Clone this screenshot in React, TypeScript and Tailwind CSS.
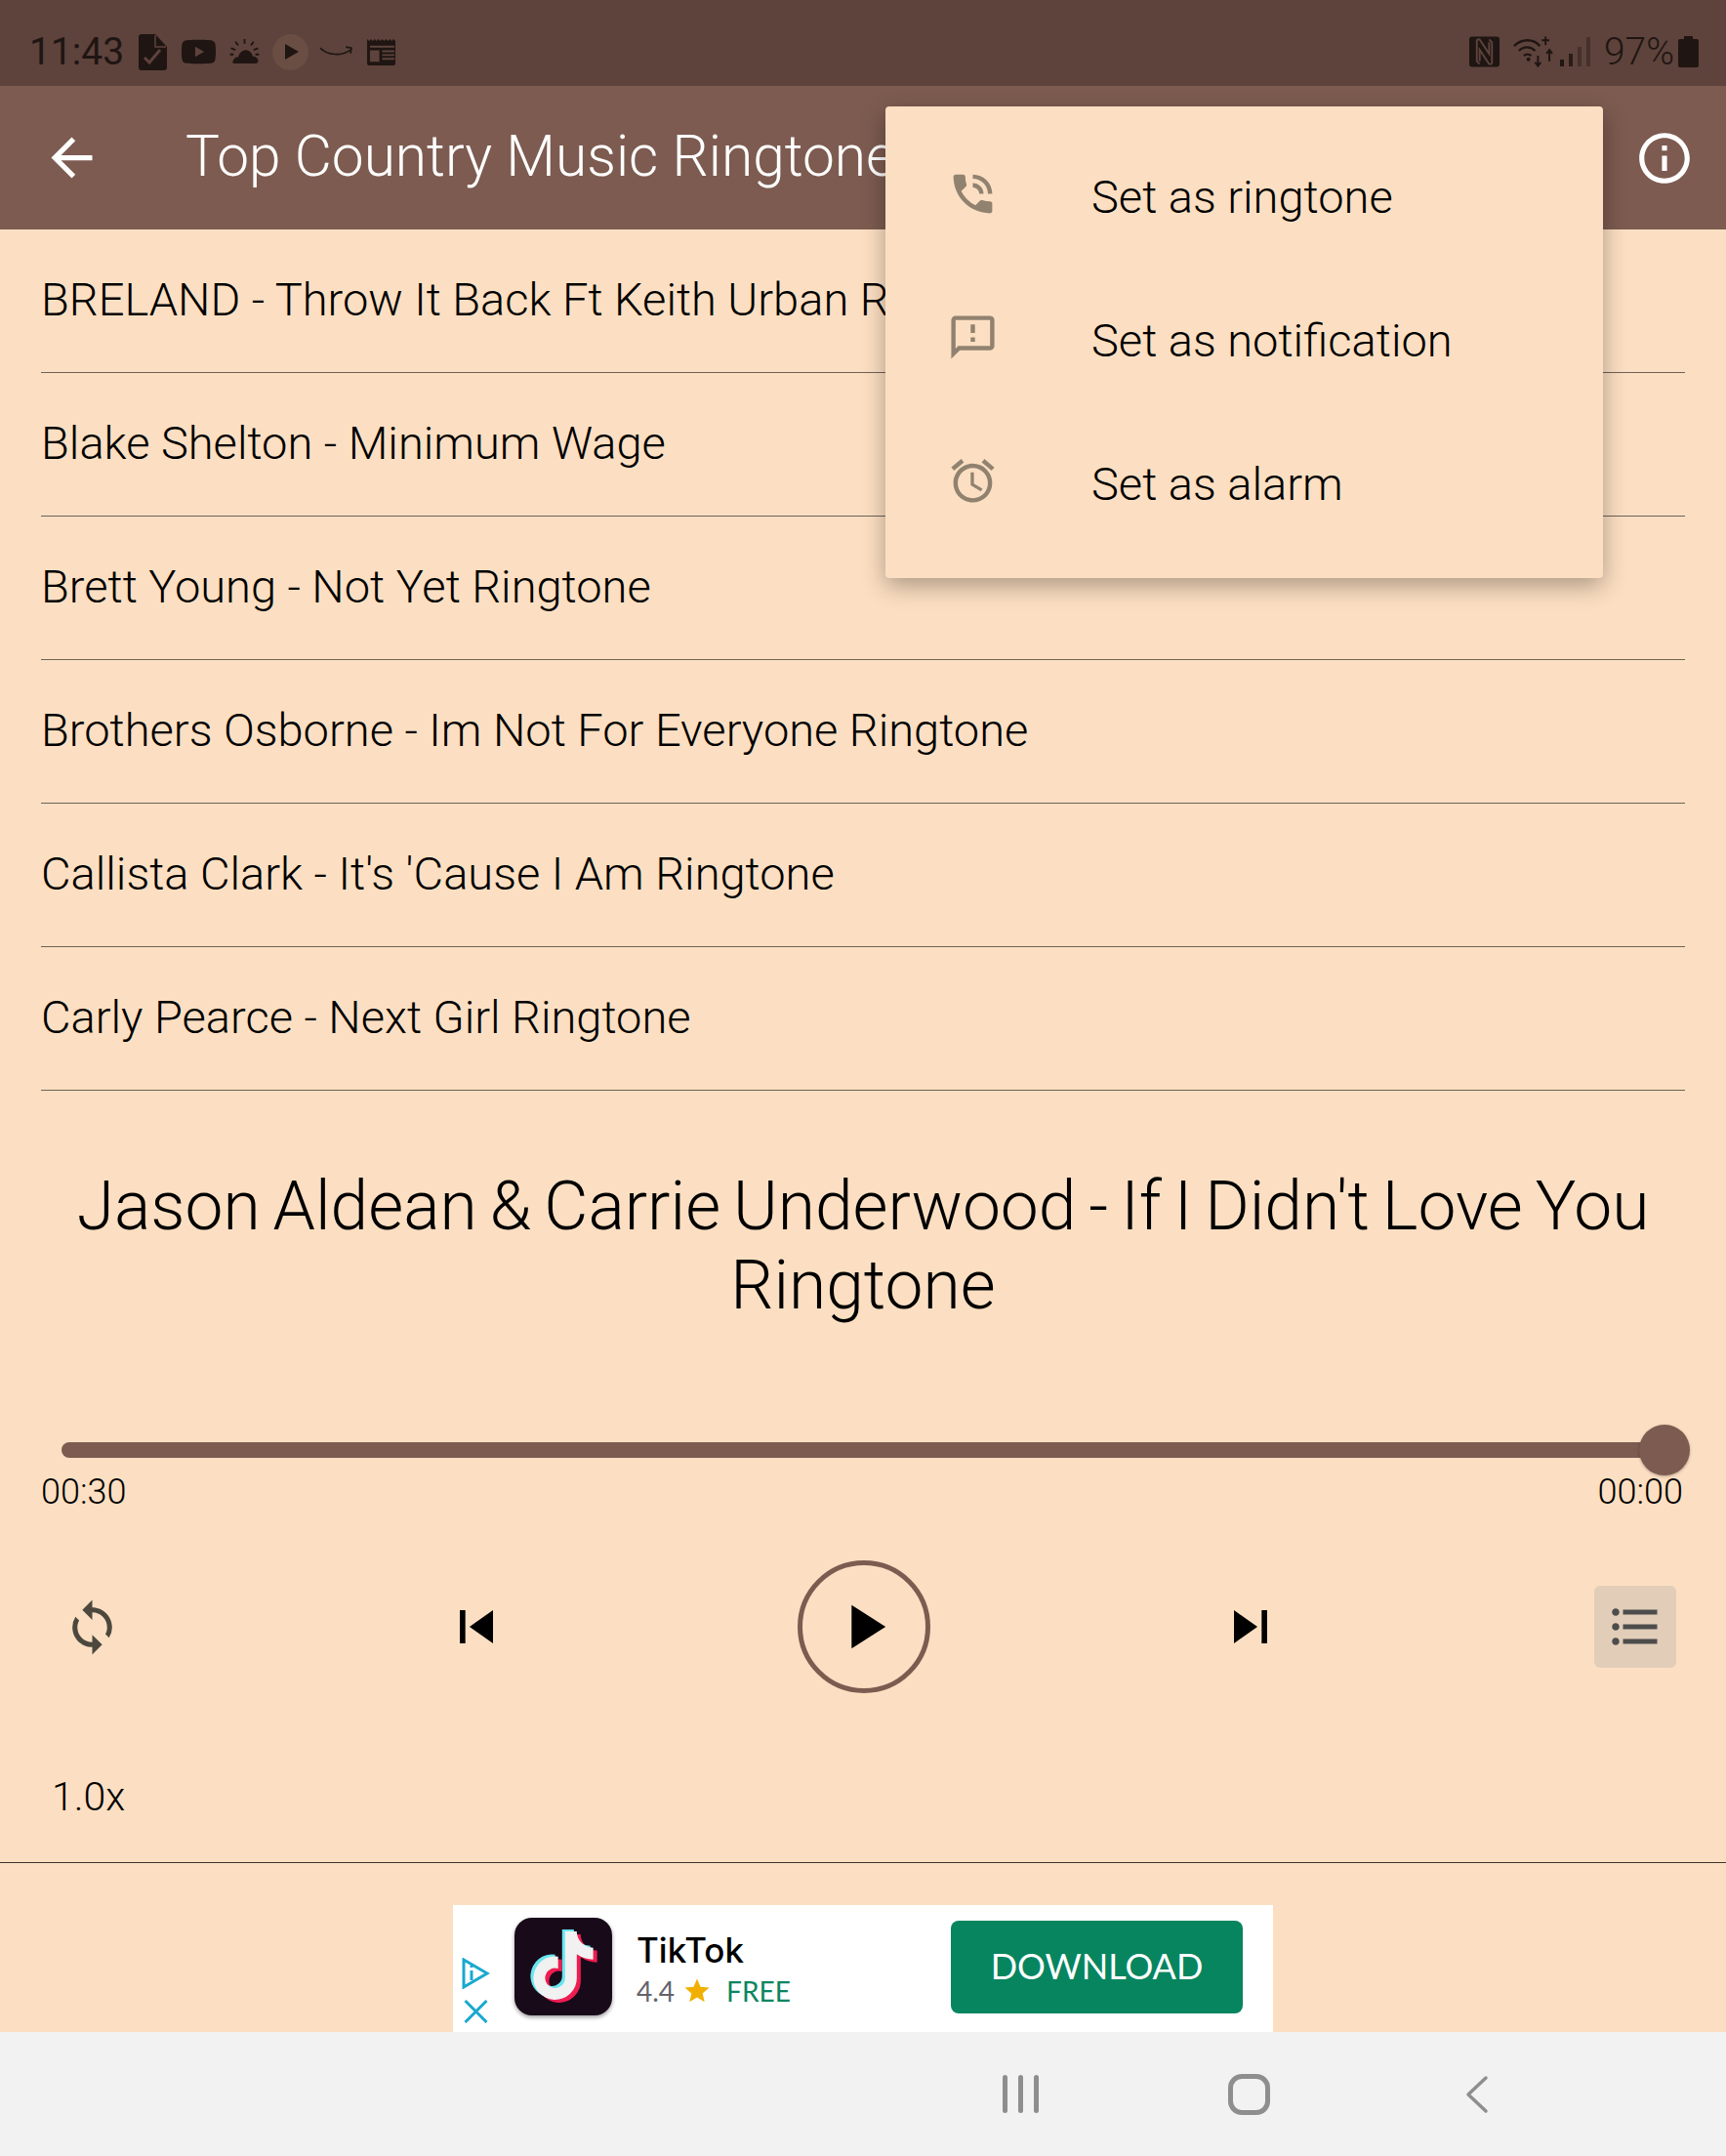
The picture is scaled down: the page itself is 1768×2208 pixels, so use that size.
import { FaTiktok, FaYoutube } from 'react-icons/fa'
import {
  MdAccessAlarm,
  MdArrowBack,
  MdFormatListBulleted,
  MdInfoOutline,
  MdOutlineFeedback,
  MdPhoneInTalk,
  MdPlayArrow,
  MdSkipNext,
  MdSkipPrevious,
  MdStar,
  MdSync,
} from 'react-icons/md'

const songs = [
  'BRELAND - Throw It Back Ft Keith Urban Ringtone',
  'Blake Shelton - Minimum Wage',
  'Brett Young - Not Yet Ringtone',
  'Brothers Osborne - Im Not For Everyone Ringtone',
  "Callista Clark - It's 'Cause I Am Ringtone",
  'Carly Pearce - Next Girl Ringtone',
]

const menuItems = [
  { label: 'Set as ringtone', icon: MdPhoneInTalk },
  { label: 'Set as notification', icon: MdOutlineFeedback },
  { label: 'Set as alarm', icon: MdAccessAlarm },
]

function StatusLeft() {
  return (
    <div className="flex items-center text-[#1f1512]">
      <span className="w-[98px] text-[39px] font-normal leading-none">11:43</span>
      <svg viewBox="0 0 29 37" className="ml-[14px] h-[37px] w-[29px]" fill="currentColor">
        <path d="M3 0h14l12 13v21a3 3 0 0 1-3 3H3a3 3 0 0 1-3-3V3a3 3 0 0 1 3-3z" />
        <path d="M6 24l5 5 11-13" fill="none" stroke="#5d433c" strokeWidth="3" />
        <path d="M17 1v12h11" fill="none" stroke="#5d433c" strokeWidth="1.5" />
      </svg>
      <FaYoutube className="ml-[14px] h-[42px] w-[37px]" />
      <svg viewBox="0 0 32 28" className="ml-[13px] h-[26px] w-[31px]" fill="currentColor">
        <path d="M3 26c0-4 3-6 6-6 1-5 5-8 8-8s7 2 8 7c3 0 6 2 6 5 0 2-1 3-3 3H5c-1 0-2 0-2-1z" />
        <path d="M16 0v5M6 3l3 4M26 3l-3 4M1 10l5 2M31 10l-5 2M0 17h4M32 17h-4" stroke="currentColor" strokeWidth="2" />
      </svg>
      <div className="ml-[13px] flex h-[37px] w-[37px] items-center justify-center rounded-full bg-[#6a4e44]">
        <div className="ml-[2px] h-0 w-0 border-y-[8px] border-l-[14px] border-y-transparent border-l-[#1f1512]" />
      </div>
      <svg viewBox="0 0 36 14" className="ml-[11px] h-[14px] w-[35px]" fill="none" stroke="currentColor" strokeWidth="1.6">
        <path d="M1 3c8 8 22 9 32 2" />
        <path d="M28 2l6 1-1 6" />
      </svg>
      <svg viewBox="0 0 32 28" className="ml-[14px] h-[27px] w-[31px]" fill="currentColor">
        <path d="M0 0l2 2 2-2 2 2 2-2 2 2 2-2 2 2 2-2 2 2 2-2 2 2 2-2 2 2 2-2 2 2v24a2 2 0 0 1-2 2H2a2 2 0 0 1-2-2z" />
        <path d="M3 7h26v2H3zM3 12h10v12H3zM16 12h13v2H16zM16 16h13v2H16zM16 20h13v2H16z" fill="#5d433c" />
      </svg>
    </div>
  )
}

function StatusRight() {
  return (
    <div className="flex items-center text-[#1f1512]">
      <svg viewBox="0 0 32 32" className="h-[32px] w-[31px]" fill="currentColor">
        <rect width="32" height="32" rx="3" />
        <path d="M8 3h3l10 15V6M24 29h-3L11 14v12" fill="none" stroke="#5d433c" strokeWidth="2" />
        <path d="M8 3v23l3 3M24 29V6l-3-3" fill="none" stroke="#5d433c" strokeWidth="2" />
      </svg>
      <svg viewBox="0 0 42 32" className="ml-[14px] h-[32px] w-[41px]" fill="none" stroke="currentColor" strokeWidth="2.4">
        <path d="M1 10c8-8 20-8 27 0M6 15c5-5 12-5 17 0M11 20c3-2 5-2 8 0" />
        <circle cx="16" cy="24" r="2" fill="currentColor" stroke="none" />
        <path d="M34 0v9M30 4h8M26 20v11M23 27l3 4 3-4M38 14v12M35 18l3-4 3 4" strokeWidth="2" />
      </svg>
      <div className="ml-[7px] flex h-[30px] items-end gap-[5px]">
        <div className="h-[7px] w-[4px] bg-[#1f1512]" />
        <div className="h-[13px] w-[4px] bg-[#2a1c18]" />
        <div className="h-[20px] w-[4px] bg-[#46302a]" />
        <div className="h-[30px] w-[4px] bg-[#46302a]" />
      </div>
      <span className="ml-[14px] text-[39px] font-light leading-none">97%</span>
      <svg viewBox="0 0 21 32" className="ml-[4px] h-[32px] w-[21px]" fill="currentColor">
        <path d="M6 0h9v3h4a2 2 0 0 1 2 2v25a2 2 0 0 1-2 2H2a2 2 0 0 1-2-2V5a2 2 0 0 1 2-2h4z" />
      </svg>
    </div>
  )
}

function PopupMenu() {
  return (
    <div className="absolute left-[907px] top-[109px] w-[735px] rounded-[4px] bg-[#fcdfc2] py-[21px] shadow-[0_8px_24px_rgba(0,0,0,0.32)]">
      {menuItems.map(item => (
        <div key={item.label} className="flex h-[147px] items-center pl-[63px]">
          <item.icon className="mb-[10px] h-[53px] w-[53px] text-[#918270]" />
          <span className="mb-[2px] ml-[95px] text-[47px] font-light text-black">{item.label}</span>
        </div>
      ))}
    </div>
  )
}

function AdBanner() {
  return (
    <div className="ml-[464px] flex h-[130px] w-[840px] items-center bg-white">
      <div className="ml-[8px] flex w-[30px] flex-col items-center gap-[11px] self-end pb-[9px] text-[#1aa9cf]">
        <svg viewBox="1 1 28 32" className="h-[32px] w-[30px]" fill="none" stroke="currentColor" strokeWidth="3">
          <path d="M3 3l24 14L3 31z" />
          <path d="M11 14v10M11 9v2" />
        </svg>
        <svg viewBox="1 1 24 24" className="h-[24px] w-[25px]" fill="none" stroke="currentColor" strokeWidth="3">
          <path d="M2 2l22 22M24 2L2 24" />
        </svg>
      </div>
      <div className="relative mb-[4px] ml-[25px] h-[100px] w-[100px] overflow-hidden rounded-[18px] bg-[#190a1a] shadow-[0_2px_4px_rgba(0,0,0,0.4)]">
        <FaTiktok className="absolute left-[19px] top-[17px] h-[70px] w-[70px] text-[#ee1d52]" />
        <FaTiktok className="absolute left-[12px] top-[12px] h-[70px] w-[70px] text-[#69e6ee]" />
        <FaTiktok className="absolute left-[15px] top-[14px] h-[70px] w-[70px] text-[#f1f1f1]" />
      </div>
      <div className="ml-[25px] flex w-[322px] flex-col">
        <span className="mb-[3px] font-['Inter',sans-serif] text-[35px] font-medium leading-[41px] text-black">TikTok</span>
        <div className="mt-[1px] flex items-center font-['Lato',sans-serif] text-[28px] leading-[34px]">
          <span className="text-[#63636b]">4.4</span>
          <MdStar className="ml-[8px] h-[30px] w-[30px] text-[#f1b000]" />
          <span className="ml-[15px] text-[#0a8560]">FREE</span>
        </div>
      </div>
      <div className="mb-[3px] flex h-[95px] w-[299px] items-center justify-center rounded-[8px] bg-[#07855f] pb-[3px] font-['Lato',sans-serif] text-[36px] text-white">
        DOWNLOAD
      </div>
    </div>
  )
}

export default function App() {
  return (
    <div className="relative flex h-[2208px] w-[1768px] flex-col overflow-hidden bg-[#fcdfc2] font-['Roboto',sans-serif]">
      <div className="flex h-[88px] items-center justify-between bg-[#5d433c] pl-[30px] pr-[28px] pt-[18px]">
        <StatusLeft />
        <StatusRight />
      </div>

      <div className="flex h-[147px] items-center bg-[#7d5b50] text-white">
        <MdArrowBack className="ml-[42px] h-[63px] w-[63px] shrink-0" />
        <span className="mb-[2px] ml-[85px] min-w-0 flex-1 whitespace-nowrap text-[58.6px] font-light">Top Country Music Ringtones</span>
        <MdInfoOutline className="mr-[32px] h-[62px] w-[62px] shrink-0" />
      </div>

      <div className="px-[42px]">
        {songs.map(song => (
          <div
            key={song}
            className="flex h-[147px] items-center overflow-hidden whitespace-nowrap border-b-[1.4px] border-[#6e6257] pb-[2px] text-[47px] font-light text-black"
          >
            {song}
          </div>
        ))}
      </div>

      <h1 className="mx-[40px] mt-[78px] text-center text-[69.5px] font-light leading-[81px] text-black [word-spacing:-4px]">
        Jason Aldean &amp; Carrie Underwood - If I Didn't Love You Ringtone
      </h1>

      <div className="relative mx-[63px] mt-[120px] h-[16px] rounded-full bg-[#7d5b50]">
        <div className="absolute right-[-26px] top-[-18px] h-[52px] w-[52px] rounded-full bg-[#7d5b50] shadow-[0_1px_3px_rgba(0,0,0,0.3)]" />
      </div>

      <div className="mt-[15px] flex justify-between pl-[42px] pr-[44px] text-[36px] font-light leading-[40px] text-black">
        <span>00:30</span>
        <span>00:00</span>
      </div>

      <div className="mt-[50px] flex h-[136px] items-center">
        <MdSync className="ml-[64px] h-[61px] w-[61px] text-[#4d483e]" />
        <MdSkipPrevious className="ml-[329px] h-[68px] w-[68px] text-black" />
        <div className="ml-[295px] flex h-[136px] w-[136px] items-center justify-center rounded-full border-[5px] border-[#7d5b50]">
          <MdPlayArrow className="h-[76px] w-[76px] text-black" />
        </div>
        <MdSkipNext className="ml-[294px] h-[68px] w-[68px] text-black" />
        <div className="ml-[318px] flex h-[84px] w-[84px] items-center justify-center rounded-[6px] bg-[#e2cdb8]">
          <MdFormatListBulleted className="h-[60px] w-[60px] text-[#4d4d4d]" />
        </div>
      </div>

      <div className="ml-[53px] mt-[83px] text-[41px] font-light leading-[46px] text-black">1.0x</div>

      <div className="mt-[44px] h-[1px] bg-[#3d3630]" />

      <div className="mt-[43px]">
        <AdBanner />
      </div>

      <div className="flex flex-1 items-center bg-[#f2f2f2] text-[#8e8e8e]">
        <div className="ml-[1027px] flex gap-[11px]">
          <div className="h-[39px] w-[5px] rounded-full bg-[#8e8e8e]" />
          <div className="h-[39px] w-[5px] rounded-full bg-[#8e8e8e]" />
          <div className="h-[39px] w-[5px] rounded-full bg-[#8e8e8e]" />
        </div>
        <div className="ml-[194px] h-[42px] w-[43px] rounded-[14px] border-[5px] border-[#8e8e8e]" />
        <svg viewBox="0 0 25 40" className="ml-[199px] h-[40px] w-[25px]" fill="none" stroke="currentColor" strokeWidth="3.5" strokeLinecap="round" strokeLinejoin="round">
          <path d="M22 3L4 20l18 17" />
        </svg>
      </div>

      <PopupMenu />
    </div>
  )
}
